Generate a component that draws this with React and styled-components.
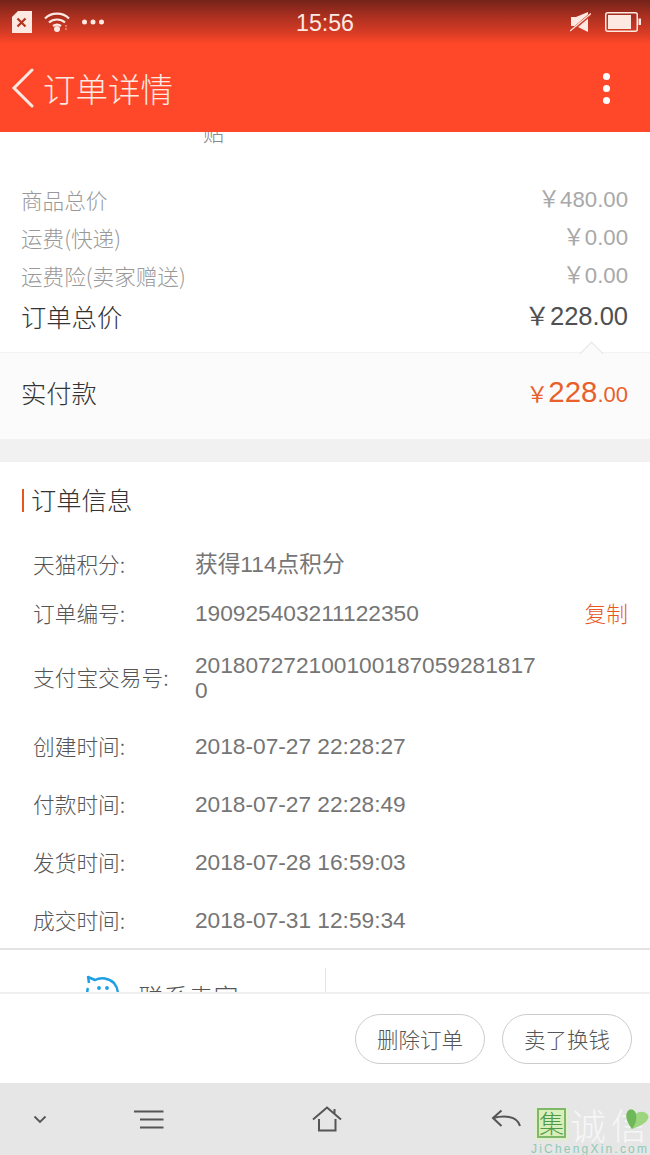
import styled, { createGlobalStyle } from 'styled-components';

const GlobalStyle = createGlobalStyle`
  html, body { margin: 0; padding: 0; background: #fff; }
  body { font-family: "Noto Sans CJK SC", "Liberation Sans", sans-serif; }
  * { box-sizing: border-box; }
`;

const priceRows = [
  { label: '商品总价', value: '￥480.00' },
  { label: '运费(快递)', value: '￥0.00' },
  { label: '运费险(卖家赠送)', value: '￥0.00' },
];

const infoRows = [
  { label: '天猫积分:', value: '获得114点积分', height: 49 },
  { label: '订单编号:', value: '190925403211122350', height: 49, copy: true },
  { label: '支付宝交易号:', value: '2018072721001001870592818170', height: 79 },
  { label: '创建时间:', value: '2018-07-27 22:28:27', height: 58 },
  { label: '付款时间:', value: '2018-07-27 22:28:49', height: 58 },
  { label: '发货时间:', value: '2018-07-28 16:59:03', height: 58 },
  { label: '成交时间:', value: '2018-07-31 12:59:34', height: 58 },
];

function App() {
  return (
    <Page>
      <GlobalStyle />
      <StatusBar>
        <StatusGroup>
          <svg width="20" height="22" viewBox="0 0 20 22">
            <path d="M6 0h14v22H0V6z" fill="#fde8e2" />
            <path d="M5.500 7.500l8 8M13.500 7.500l-8 8" stroke="#b5341f" strokeWidth="2.200" />
          </svg>
          <svg width="26" height="20" viewBox="0 0 26 20" fill="none" stroke="#fde8e2" strokeWidth="2.200">
            <path d="M1 6.500c6-6.500 18-6.500 24 0" />
            <path d="M5 10.500c4.500-4 11.500-4 16 0" />
            <path d="M9 14c2.500-1.800 5.500-1.800 8 0" />
            <circle cx="13" cy="17" r="3" fill="#fde8e2" stroke="none" />
            <path d="M21 14h2M21 17h2" stroke="#f08a70" strokeWidth="1.300" />
          </svg>
          <svg width="22" height="6" viewBox="0 0 22 6" fill="#fde8e2">
            <circle cx="2.500" cy="3" r="2.500" />
            <circle cx="11" cy="3" r="2.500" />
            <circle cx="19.500" cy="3" r="2.500" />
          </svg>
        </StatusGroup>
        <Clock>15:56</Clock>
        <StatusGroup $right>
          <svg width="21" height="20" viewBox="0 0 21 20">
            <path d="M1 5h5l12-5v20L6 14H1z" fill="#fde8e2" />
            <path d="M0 20L21 2" stroke="#cf3c25" strokeWidth="3" />
            <path d="M0 19L21 1.500" stroke="#fde8e2" strokeWidth="1.300" />
          </svg>
          <svg width="36" height="20" viewBox="0 0 36 20">
            <rect x="0.750" y="0.750" width="31.500" height="18.500" rx="2" fill="none" stroke="#fde8e2" strokeWidth="1.500" />
            <rect x="3" y="3" width="23" height="14" fill="#fde8e2" />
            <rect x="33.500" y="6.500" width="2.500" height="6.500" fill="#fde8e2" />
          </svg>
        </StatusGroup>
      </StatusBar>

      <Header>
        <HeaderLeft>
          <svg width="24" height="40" viewBox="0 0 24 40" fill="none" stroke="#fde8e2" strokeWidth="3" strokeLinecap="round">
            <path d="M21 2L3 20l18 18" />
          </svg>
          <HeaderTitle>订单详情</HeaderTitle>
        </HeaderLeft>
        <MoreDots>
          <i />
          <i />
          <i />
        </MoreDots>
      </Header>

      <Scroller>
        <ClippedNote>贴</ClippedNote>
        <PriceBlock>
          {priceRows.map((row) => (
            <PriceRow key={row.label}>
              <span>{row.label}</span>
              <PriceValue>{row.value}</PriceValue>
            </PriceRow>
          ))}
          <TotalRow>
            <span>订单总价</span>
            <TotalValue>￥228.00</TotalValue>
          </TotalRow>
        </PriceBlock>
        <PaidRow>
          <Caret />
          <PaidLabel>实付款</PaidLabel>
          <PaidValue>
            <small>￥</small>
            <b>228</b>
            <small>.00</small>
          </PaidValue>
        </PaidRow>
        <Gap />
        <InfoSection>
          <InfoTitle>订单信息</InfoTitle>
          {infoRows.map((row) => (
            <InfoRow key={row.label} $height={row.height}>
              <InfoLabel>{row.label}</InfoLabel>
              <InfoValue>{row.value}</InfoValue>
              {row.copy && <CopyLink>复制</CopyLink>}
            </InfoRow>
          ))}
        </InfoSection>
        <ContactRow>
          <ContactCell>
            <svg width="34" height="36" viewBox="0 0 34 36" fill="none" stroke="#1f9fe6" strokeWidth="2.500">
              <path d="M2 2l7 3c6-3 14-2 19 3 4 5 5 12 2 18M2 1l1 7M2 13c-2 6 0 12 4 17" />
              <circle cx="13" cy="13" r="1.900" fill="#1f9fe6" stroke="none" />
              <circle cx="21" cy="13" r="1.900" fill="#1f9fe6" stroke="none" />
            </svg>
            <ContactText>联系卖家</ContactText>
          </ContactCell>
          <ContactDivider />
        </ContactRow>
      </Scroller>

      <Footer>
        <PillButton>删除订单</PillButton>
        <PillButton>卖了换钱</PillButton>
      </Footer>

      <NavBar>
        <svg width="14" height="9" viewBox="0 0 14 9" fill="none" stroke="#555" strokeWidth="1.800">
          <path d="M1.500 1.500L7 7l5.500-5.500" />
        </svg>
        <svg width="30" height="19" viewBox="0 0 30 19" fill="none" stroke="#555" strokeWidth="2">
          <path d="M0 1.500h29.500M6 9.500h23.500M6 17.500h23.500" />
        </svg>
        <svg width="30" height="26" viewBox="0 0 30 26" fill="none" stroke="#555" strokeWidth="2">
          <path d="M1 13.500L15 1.500l14 12M22.500 3v5M7 13v11.500h16.500V13" />
        </svg>
        <svg width="30" height="20" viewBox="0 0 30 20" fill="none" stroke="#555" strokeWidth="2">
          <path d="M10.500 1.500L2 9l8.500 8M2 9c10-2.500 24-3 27 8" />
        </svg>
        <Watermark>
          <WatermarkMark>
            <MarkBox>集</MarkBox>
            <MarkWords>诚信</MarkWords>
            <Heart width="24" height="22" viewBox="0 0 24 22">
              <path d="M6 20C0 12-1 6 2 2c3-3 7-1 8 3 3-3 9-3 12 1 2 4-3 10-16 14z" fill="#9ed67f" />
              <path d="M6 20C0 12-1 6 2 2c3-3 7-1 8 3 1 5 0 10-4 15z" fill="#6fb85a" />
            </Heart>
          </WatermarkMark>
          <WatermarkUrl>JiChengXin.com</WatermarkUrl>
        </Watermark>
      </NavBar>
    </Page>
  );
}

const Page = styled.div`
  width: 650px;
  height: 1155px;
  display: flex;
  flex-direction: column;
  overflow: hidden;
  background: #fff;
`;

const StatusBar = styled.div`
  height: 44px;
  flex: none;
  display: grid;
  grid-template-columns: 1fr auto 1fr;
  align-items: center;
  padding: 0 9px;
  background: linear-gradient(#74231a, #ac3020 38%, #d83c25 75%, #ff4829);
  color: #fde8e2;
`;

const StatusGroup = styled.div`
  display: flex;
  align-items: center;
  justify-content: ${(p) => (p.$right ? 'flex-end' : 'flex-start')};
  gap: ${(p) => (p.$right ? '14px' : '12px')};
  padding-left: ${(p) => (p.$right ? '0' : '3px')};
`;

const Clock = styled.div`
  font: 23.200px/1 "Liberation Sans", sans-serif;
  color: #fde8e2;
  margin-top: 4px;
`;

const Header = styled.div`
  height: 88px;
  flex: none;
  display: flex;
  align-items: center;
  justify-content: space-between;
  padding: 0 40px 0 11px;
  background: #ff4829;
`;

const HeaderLeft = styled.div`
  display: flex;
  align-items: center;
  gap: 8px;
`;

const HeaderTitle = styled.div`
  font-size: 32.500px;
  line-height: 44px;
  font-weight: 300;
  color: #fde8e2;
`;

const MoreDots = styled.div`
  display: flex;
  flex-direction: column;
  gap: 5px;

  i {
    display: block;
    width: 7px;
    height: 7px;
    border-radius: 50%;
    background: #fff;
  }
`;

const Scroller = styled.div`
  flex: 1;
  min-height: 0;
  overflow: hidden;
  display: flex;
  flex-direction: column;
`;

const ClippedNote = styled.div`
  flex: none;
  margin-top: -13px;
  padding-left: 203px;
  height: 52px;
  font-size: 21px;
  line-height: 26px;
  font-weight: 300;
  color: #888;
`;

const PriceBlock = styled.div`
  flex: none;
  padding: 9px 22px 0 21px;
  height: 181px;
`;

const PriceRow = styled.div`
  height: 38px;
  display: flex;
  justify-content: space-between;
  align-items: center;
  font-size: 21.600px;
  font-weight: 300;
  color: #999;
`;

const PriceValue = styled.span`
  margin-bottom: 4px;
  font: 22.200px "Liberation Sans", "Noto Sans CJK SC", sans-serif;
  color: #a8a8a8;
`;

const TotalRow = styled.div`
  height: 44px;
  display: flex;
  justify-content: space-between;
  align-items: center;
  font-size: 25.300px;
  font-weight: 300;
  color: #333;
`;

const TotalValue = styled.span`
  margin-bottom: 6px;
  font: 25.500px "Liberation Sans", "Noto Sans CJK SC", sans-serif;
  color: #505050;
`;

const PaidRow = styled.div`
  position: relative;
  flex: none;
  height: 87px;
  display: flex;
  align-items: center;
  justify-content: space-between;
  padding: 0 22px 8px 21px;
  background: #fbfbfb;
  border-top: 1px solid #f3f3f3;
`;

const Caret = styled.div`
  position: absolute;
  right: 50px;
  top: -8px;
  width: 17px;
  height: 17px;
  background: #fbfbfb;
  border-top: 1px solid #e5e5e5;
  border-left: 1px solid #e5e5e5;
  transform: rotate(45deg);
`;

const PaidLabel = styled.div`
  font-size: 25.300px;
  font-weight: 300;
  color: #333;
`;

const PaidValue = styled.div`
  font-family: "Liberation Sans", "Noto Sans CJK SC", sans-serif;
  color: #e8602a;

  b {
    font-size: 29.400px;
    font-weight: 400;
  }

  small {
    font-size: 22px;
  }
`;

const Gap = styled.div`
  flex: none;
  height: 23px;
  background: #f1f1f1;
`;

const InfoSection = styled.div`
  flex: none;
  padding-top: 27px;
  border-bottom: 2px solid #e4e4e4;
  height: 488px;
`;

const InfoTitle = styled.div`
  margin: 0 0 27px 22px;
  padding-left: 7px;
  border-left: 2px solid #e8561e;
  height: 23px;
  font-size: 25.300px;
  line-height: 20px;
  font-weight: 300;
  color: #333;
`;

const InfoRow = styled.div`
  height: ${(p) => p.$height}px;
  display: flex;
  align-items: center;
  padding: 0 22px 0 33px;
  font-size: 21.700px;
  font-weight: 300;
  color: #555;
`;

const InfoLabel = styled.div`
  width: 162px;
  flex: none;
`;

const InfoValue = styled.div`
  width: 345px;
  flex: none;
  padding-top: 2px;
  font-family: "Liberation Sans", "Noto Sans CJK SC", sans-serif;
  font-size: 22.700px;
  font-weight: 400;
  line-height: 25px;
  word-break: break-all;
  color: #757575;
`;

const CopyLink = styled.div`
  margin-left: auto;
  color: #e8561e;
`;

const ContactRow = styled.div`
  flex: none;
  display: flex;
  height: 42px;
  padding-top: 18px;
`;

const ContactCell = styled.div`
  width: 325px;
  display: flex;
  justify-content: center;
  align-items: flex-start;
  gap: 18px;
  padding-top: 7px;
`;

const ContactText = styled.div`
  margin-top: -1px;
  font-size: 25px;
  line-height: 44px;
  font-weight: 300;
  color: #555;
`;

const ContactDivider = styled.div`
  width: 1px;
  height: 40px;
  background: #e4e4e4;
`;

const Footer = styled.div`
  height: 91px;
  flex: none;
  display: flex;
  align-items: center;
  justify-content: flex-end;
  gap: 17px;
  padding: 0 18px 0 0;
  border-top: 2px solid #f0f0f0;
  background: #fff;
`;

const PillButton = styled.div`
  width: 130px;
  height: 50px;
  border: 1px solid #ccc;
  border-radius: 25px;
  display: flex;
  align-items: center;
  justify-content: center;
  font-size: 21.500px;
  font-weight: 300;
  color: #555;
`;

const NavBar = styled.div`
  position: relative;
  height: 72px;
  flex: none;
  display: grid;
  grid-template-columns: 80px 138px 218px 140px;
  justify-items: center;
  align-items: center;
  background: #e6e6e6;
`;

const Watermark = styled.div`
  position: absolute;
  left: 531px;
  top: 25px;
  width: 119px;
  overflow: hidden;
`;

const WatermarkMark = styled.div`
  position: relative;
  display: flex;
  align-items: flex-start;
  gap: 4px;
  height: 35px;
  padding-left: 6px;
`;

const MarkBox = styled.div`
  width: 30px;
  height: 30px;
  background: #d9eeb9;
  border: 2px solid #7fb868;
  box-shadow: 0 0 3px 2px #e0f0c8;
  color: #4d9a4a;
  font-size: 25px;
  line-height: 25px;
  font-weight: 300;
  text-align: center;
`;

const MarkWords = styled.div`
  font-size: 36px;
  line-height: 32px;
  font-weight: 300;
  color: #f6f6f6;
  letter-spacing: 5px;
  white-space: nowrap;
`;

const Heart = styled.svg`
  position: absolute;
  right: 0;
  top: 1px;
`;

const WatermarkUrl = styled.div`
  font: 12px/12px "Liberation Sans", sans-serif;
  letter-spacing: 2.200px;
  color: #8fc9b5;
  white-space: nowrap;
`;

export default App;
